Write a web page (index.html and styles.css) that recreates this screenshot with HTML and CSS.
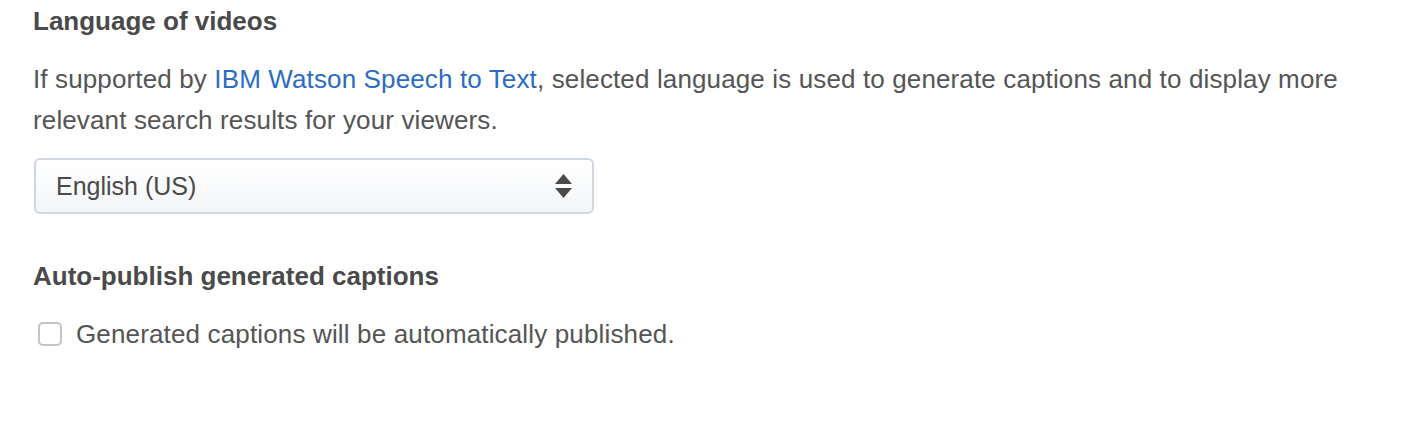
FILE: index.html
```html
<!DOCTYPE html>
<html lang="en">
<head>
  <meta charset="UTF-8">
  <title>Captions settings</title>
  <link rel="stylesheet" href="styles.css">
</head>
<body>
<div class="settings">
  <div class="section">
    <h3 class="section-title">Language of videos</h3>
    <p class="section-help">If supported by <a href="#">IBM Watson Speech to Text</a>, selected language is used to generate captions and to display more relevant search results for your viewers.</p>
    <div class="select-box">
      <span class="select-value">English (US)</span>
      <svg class="select-arrows" width="17" height="24" viewBox="0 0 17 24">
        <path d="M8.5 0 L17 10 L0 10 Z" fill="#4a4a4a"/>
        <path d="M0 14 L17 14 L8.5 24 Z" fill="#4a4a4a"/>
      </svg>
    </div>
  </div>
  <div class="section">
    <h3 class="section-title">Auto-publish generated captions</h3>
    <label class="check-row">
      <span class="check-box"></span>
      <span class="check-label">Generated captions will be automatically published.</span>
    </label>
  </div>
</div>
</body>
</html>
```

FILE: styles.css
```css
body {
  margin: 0;
  background: #fff;
  font-family: "Liberation Sans", Arial, sans-serif;
  color: #555;
}
.settings {
  padding: 5px 33px;
}
.section-title {
  margin: 0;
  font-size: 26px;
  line-height: 32px;
  font-weight: bold;
  color: #4a4a4a;
}
.section-help {
  margin: 22px 0 17px;
  font-size: 26px;
  line-height: 41px;
  letter-spacing: 0.13px;
  max-width: 1340px;
}
.section-help a {
  color: #2b6cc4;
  text-decoration: none;
}
.select-box {
  box-sizing: border-box;
  width: 560px;
  height: 56px;
  margin: 0 0 46px 1px;
  border: 2px solid #cfd8e2;
  border-radius: 6px;
  background: linear-gradient(#fff, #f3f5f8);
  display: flex;
  align-items: center;
  justify-content: space-between;
  padding: 0 20px 0 20px;
  font-size: 25px;
  color: #4a4a4a;
}
.check-row {
  display: flex;
  align-items: center;
  gap: 14px;
  margin-top: 27px;
  margin-left: 5px;
  font-size: 26px;
  line-height: 30px;
  letter-spacing: 0.15px;
}
.check-box {
  box-sizing: border-box;
  width: 24px;
  height: 24px;
  border: 2px solid #c4c4c4;
  border-radius: 5px;
  background: #fff;
}
```
